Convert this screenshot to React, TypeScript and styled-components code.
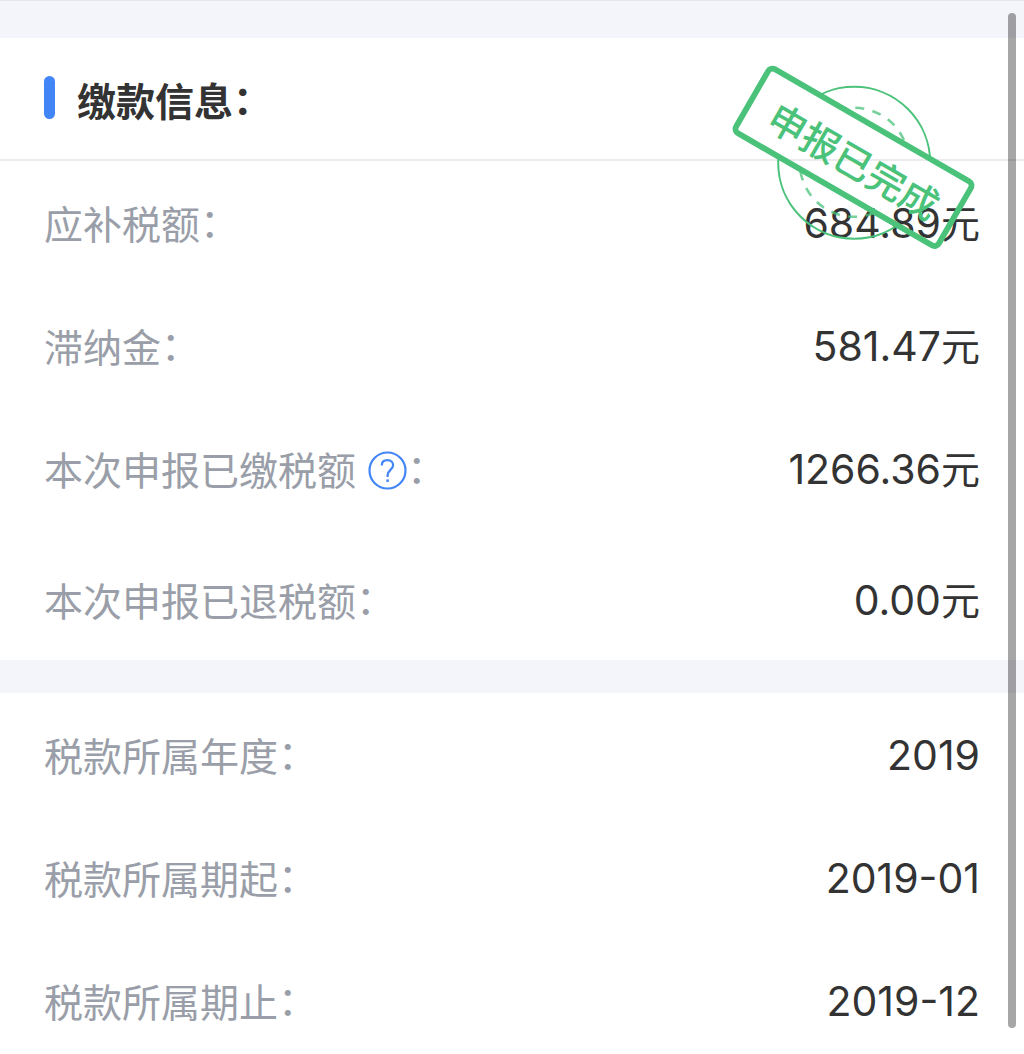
import React from "react";
import styled, { createGlobalStyle } from "styled-components";

const GlobalStyle = createGlobalStyle`
  body {
    margin: 0;
    background: #ffffff;
    color: #333333;
    font-family: Inter, "Noto Sans CJK SC", sans-serif;
  }
`;

const Page = styled.main`
  border-top: 1px solid #e5e6e9;
`;

const Band = styled.div<{ $height: number }>`
  height: ${(p) => p.$height}px;
  background: #f4f5fa;
`;

const Section = styled.section`
  position: relative;
`;

const Header = styled.header`
  display: flex;
  align-items: flex-start;
  gap: 22px;
  padding: 38px 44px 37px;
  border-bottom: 2px solid #ececee;
`;

const Accent = styled.span`
  width: 11px;
  height: 43px;
  border-radius: 6px;
  background: #4285f7;
`;

const Title = styled.h2`
  margin: 0;
  font-family: "Noto Sans CJK SC", sans-serif;
  font-size: 39px;
  line-height: 46px;
  font-weight: 700;
`;

const Colon = styled.span`
  font-family: "Noto Sans CJK TC", sans-serif;
  font-feature-settings: "halt";
`;

const List = styled.dl`
  display: flex;
  flex-direction: column;
  gap: 75px;
  margin: 0;
  padding: 38px 44px 36px;
`;

const Row = styled.div<{ $tall?: boolean }>`
  display: flex;
  justify-content: space-between;
  align-items: flex-start;
  height: ${(p) => (p.$tall ? 56 : 48)}px;
`;

const Label = styled.dt`
  display: flex;
  align-items: center;
  font-family: "Noto Sans CJK SC", sans-serif;
  font-size: 39px;
  line-height: 46px;
  color: #999ea8;
`;

const Value = styled.dd`
  margin: 0;
  font-size: 41px;
  line-height: 48px;
`;

const Unit = styled.span`
  font-size: 39px;
  line-height: 1;
`;

const HelpButton = styled.button`
  display: flex;
  margin: 4px 0 0 12px;
  padding: 0;
  border: 0;
  background: none;
  cursor: pointer;
`;

const Stamp = styled.svg`
  position: absolute;
  top: 22px;
  right: 44px;
  pointer-events: none;
`;

const StampText = styled.text`
  font-family: "Noto Sans CJK SC", sans-serif;
  font-size: 38px;
  font-weight: 500;
`;

const ScrollThumb = styled.div`
  position: fixed;
  top: 13px;
  right: 8px;
  bottom: 26px;
  width: 8px;
  border-radius: 4px;
  background: rgba(0, 0, 0, 0.35);
`;

function Help() {
  return (
    <HelpButton type="button" aria-label="说明">
      <svg width="39" height="39" viewBox="0 0 39 39" fill="none" stroke="#4285f7">
        <circle cx="19.5" cy="19.5" r="18" strokeWidth="2.2" />
        <path
          d="M13.8 14.4C13.8 11.2 16 9.2 19.5 9.2C22.9 9.2 25.1 11.3 25.1 14.2C25.1 18.4 19.6 19.4 19.6 24V26"
          strokeWidth="2.2"
        />
        <path d="M19.6 28.4V31" strokeWidth="2.4" />
      </svg>
    </HelpButton>
  );
}

function DoneStamp() {
  return (
    <Stamp width="250" height="190" viewBox="730 60 250 190" role="img" aria-label="申报已完成">
      <defs>
        <mask id="outside" maskUnits="userSpaceOnUse" x="730" y="60" width="250" height="190">
          <rect x="730" y="60" width="250" height="190" fill="#fff" />
          <rect x="-117" y="-37" width="234" height="74" fill="#000" transform="translate(853.5 157.3) rotate(30)" />
        </mask>
      </defs>
      <g stroke="#4ac27a" fill="none">
        <g mask="url(#outside)">
          <circle cx="854.2" cy="162.8" r="76" strokeWidth="2" />
          <circle
            cx="854.2"
            cy="162.3"
            r="54.5"
            strokeWidth="2.6"
            strokeDasharray="9 8.5"
            strokeDashoffset="5"
            strokeOpacity="0.75"
          />
        </g>
        <rect
          x="-117"
          y="-37"
          width="234"
          height="74"
          rx="5"
          strokeWidth="5.8"
          transform="translate(853.5 157.3) rotate(30)"
        />
      </g>
      <StampText x="0" y="15" textAnchor="middle" fill="#4ac27a" transform="translate(854 161) rotate(30)">
        申报已完成
      </StampText>
    </Stamp>
  );
}

type Item = { label: string; value: string; unit?: string; help?: boolean };

const payment: Item[] = [
  { label: "应补税额", value: "684.89", unit: "元" },
  { label: "滞纳金", value: "581.47", unit: "元" },
  { label: "本次申报已缴税额", value: "1266.36", unit: "元", help: true },
  { label: "本次申报已退税额", value: "0.00", unit: "元" },
];

const period: Item[] = [
  { label: "税款所属年度", value: "2019" },
  { label: "税款所属期起", value: "2019-01" },
  { label: "税款所属期止", value: "2019-12" },
];

function Items({ items }: { items: Item[] }) {
  return (
    <List>
      {items.map((item) => (
        <Row key={item.label} $tall={item.help}>
          <Label>
            {item.label}
            {item.help && <Help />}
            <Colon>：</Colon>
          </Label>
          <Value>
            {item.value}
            {item.unit && <Unit>{item.unit}</Unit>}
          </Value>
        </Row>
      ))}
    </List>
  );
}

export default function App() {
  return (
    <>
      <GlobalStyle />
      <Page>
        <Band $height={37} />
        <Section>
          <Header>
            <Accent />
            <Title>
              缴款信息<Colon>：</Colon>
            </Title>
          </Header>
          <Items items={payment} />
          <DoneStamp />
        </Section>
        <Band $height={33} />
        <Section>
          <Items items={period} />
        </Section>
      </Page>
      <ScrollThumb />
    </>
  );
}
